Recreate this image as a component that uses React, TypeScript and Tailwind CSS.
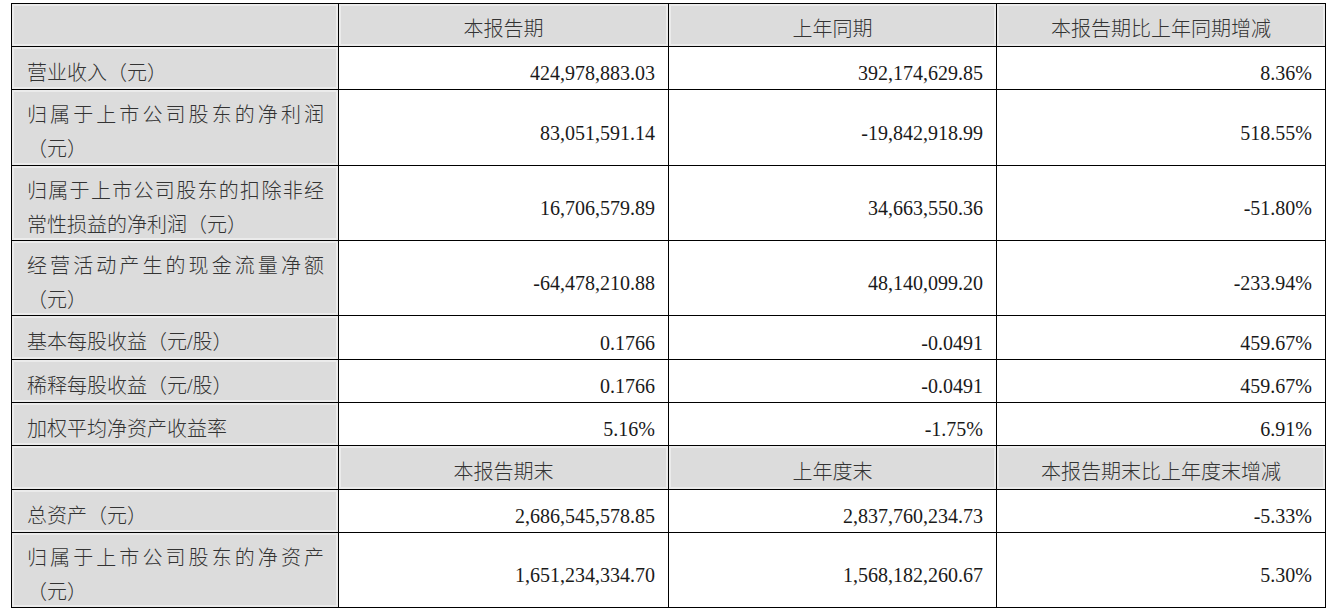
import React from 'react';

type Row = {
  label: string;
  values: [string, string, string];
};

const rowsTop: Row[] = [
  { label: '营业收入（元）', values: ['424,978,883.03', '392,174,629.85', '8.36%'] },
  { label: '归属于上市公司股东的净利润（元）', values: ['83,051,591.14', '-19,842,918.99', '518.55%'] },
  { label: '归属于上市公司股东的扣除非经常性损益的净利润（元）', values: ['16,706,579.89', '34,663,550.36', '-51.80%'] },
  { label: '经营活动产生的现金流量净额（元）', values: ['-64,478,210.88', '48,140,099.20', '-233.94%'] },
  { label: '基本每股收益（元/股）', values: ['0.1766', '-0.0491', '459.67%'] },
  { label: '稀释每股收益（元/股）', values: ['0.1766', '-0.0491', '459.67%'] },
  { label: '加权平均净资产收益率', values: ['5.16%', '-1.75%', '6.91%'] },
];

const rowsBottom: Row[] = [
  { label: '总资产（元）', values: ['2,686,545,578.85', '2,837,760,234.73', '-5.33%'] },
  { label: '归属于上市公司股东的净资产（元）', values: ['1,651,234,334.70', '1,568,182,260.67', '5.30%'] },
];

const font = 'font-["Liberation_Serif","Noto_Sans_CJK_SC",serif]';
const gray = 'bg-[#dcdcdc] shadow-[inset_0_0_0_2px_#ebebeb]';

function HeaderRow({ cols }: { cols: [string, string, string] }) {
  return (
    <>
      <div className={gray} />
      {cols.map((c) => (
        <div
          key={c}
          className={`${gray} flex items-center justify-center pt-[8px] text-[20px] font-light text-[#333333]`}
        >
          {c}
        </div>
      ))}
    </>
  );
}

function DataRow({ row }: { row: Row }) {
  return (
    <>
      <div
        className={`${gray} flex items-center pl-[15px] pr-[14px] pt-[9px] text-[20px] leading-[34px] font-light text-[#333333] text-justify`}
      >
        <span className="block w-full">{row.label}</span>
      </div>
      {row.values.map((v, i) => (
        <div
          key={i}
          className="flex items-center justify-end bg-white pr-[13px] pt-[10px] text-[20px] text-[#1a1a1a]"
        >
          {v}
        </div>
      ))}
    </>
  );
}

export default function App() {
  return (
    <div className={`min-h-[614px] w-[1336px] bg-white ${font}`}>
      <div className="pt-[3px] pl-[11px]">
        <div className="grid w-fit grid-cols-[326px_329px_327px_328px] grid-rows-[42px_42px_75px_74px_74px_43px_42px_42px_43px_42px_74px] gap-px bg-black p-px">
          <HeaderRow cols={['本报告期', '上年同期', '本报告期比上年同期增减']} />
          {rowsTop.map((r) => (
            <DataRow key={r.label} row={r} />
          ))}
          <HeaderRow cols={['本报告期末', '上年度末', '本报告期末比上年度末增减']} />
          {rowsBottom.map((r) => (
            <DataRow key={r.label} row={r} />
          ))}
        </div>
      </div>
    </div>
  );
}
